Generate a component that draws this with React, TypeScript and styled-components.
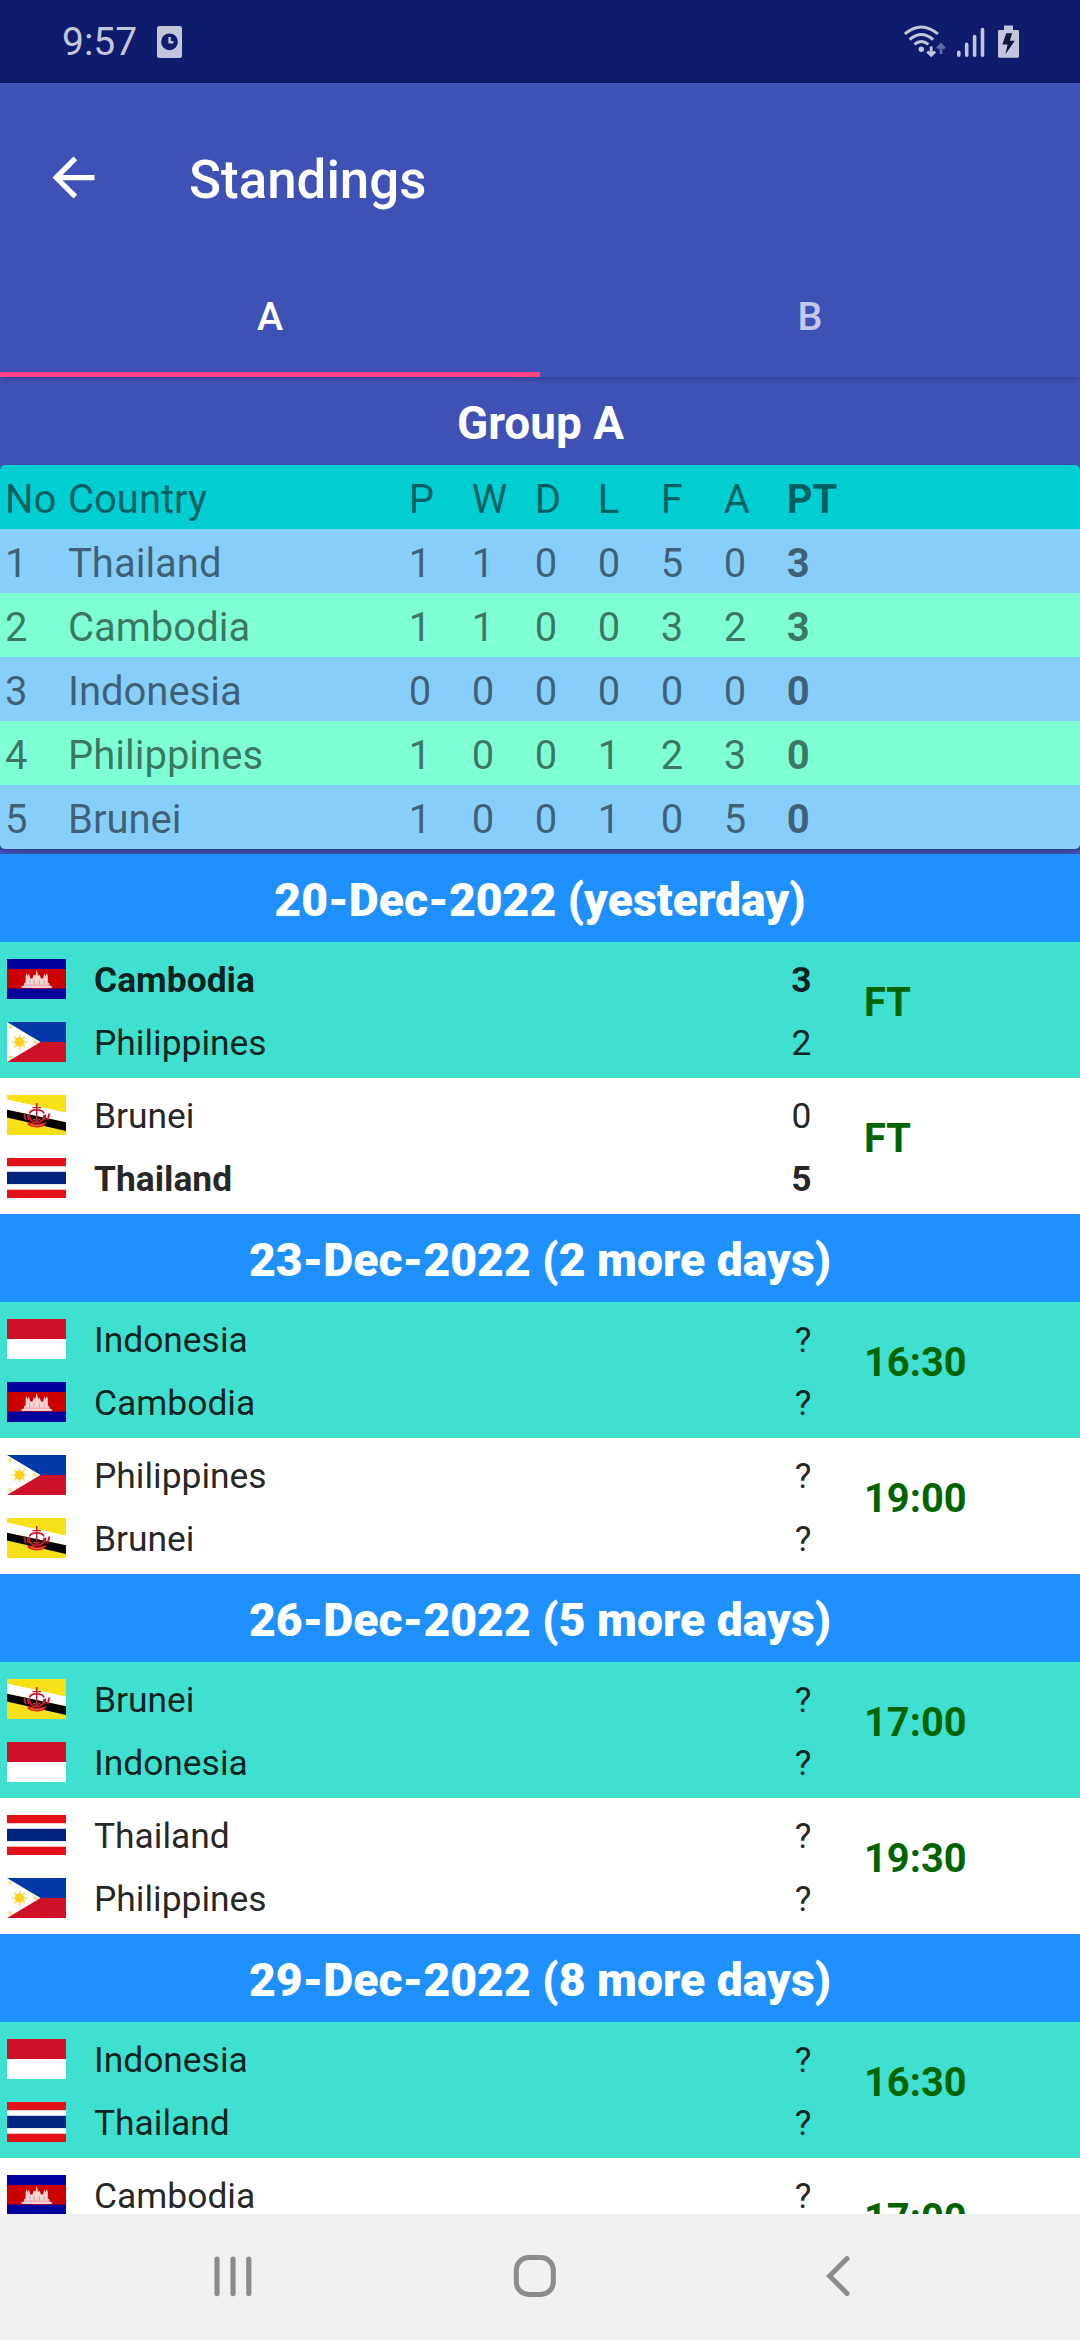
import React from 'react';
import styled, { createGlobalStyle } from 'styled-components';

const GlobalStyle = createGlobalStyle`
  *, *::before, *::after { box-sizing: border-box; }
  body { margin: 0; font-family: Roboto, 'Noto Sans', sans-serif; }
`;

const Screen = styled.div`
  width: 1080px;
  height: 2340px;
  display: flex;
  flex-direction: column;
  overflow: hidden;
  background: #3f51b5;
`;

const StatusBar = styled.div`
  flex: none;
  height: 83px;
  padding: 0 59px 0 62px;
  display: flex;
  align-items: center;
  justify-content: space-between;
  background: #0f1b6c;
  color: #c3c6db;
`;

const StatusGroup = styled.div`
  display: flex;
  align-items: center;
`;

const Clock = styled.span`
  width: 94.5px;
  font-size: 39px;
  line-height: 46px;
  padding-top: 1px;
`;

const AppBar = styled.header`
  flex: none;
  position: relative;
  z-index: 1;
  background: #3f51b5;
  box-shadow: 0 1px 7px rgba(0, 0, 0, 0.24);
`;

const Toolbar = styled.div`
  height: 168px;
  padding: 21px 0 0 42px;
  display: flex;
  align-items: center;
`;

const BackButton = styled.button`
  width: 147px;
  height: 63px;
  padding: 0;
  border: 0;
  background: none;
  display: flex;
  justify-content: flex-start;
`;

const Title = styled.h1`
  margin: 0;
  padding-top: 5px;
  color: #fff;
  font-size: 52.9px;
  font-weight: 500;
  line-height: 62px;
`;

const Tabs = styled.nav`
  height: 126px;
  display: grid;
  grid-template-columns: 1fr 1fr;
`;

const Tab = styled.div<{ $active?: boolean }>`
  display: flex;
  align-items: center;
  justify-content: center;
  padding-top: 10px;
  border-bottom: 5px solid ${(p) => (p.$active ? '#ff4081' : 'transparent')};
  color: ${(p) => (p.$active ? '#fff' : 'rgba(255, 255, 255, 0.7)')};
  font-size: 39.4px;
  font-weight: 500;
`;

const Content = styled.main`
  flex: 1;
  min-height: 0;
  overflow: hidden;
`;

const GroupHeading = styled.h2`
  margin: 0;
  height: 88px;
  padding: 3px 0 0 1px;
  display: flex;
  align-items: center;
  justify-content: center;
  color: #fff;
  font-size: 45.9px;
  font-weight: 700;
`;

const TableCard = styled.section`
  margin-bottom: 5px;
  border-radius: 5px;
  overflow: hidden;
  box-shadow: 0 2px 5px rgba(0, 0, 0, 0.28);
`;

const TableRow = styled.div<{ $bg: string }>`
  height: 64px;
  padding: 5px 0 0 5px;
  display: grid;
  grid-template-columns: 63px 340.75px repeat(6, 63px) 1fr;
  align-items: center;
  background: ${(p) => p.$bg};
  color: rgba(0, 0, 0, 0.54);
  font-size: 40px;
  line-height: 48px;
  white-space: nowrap;
`;

const Cell = styled.span<{ $strong?: boolean }>`
  font-weight: ${(p) => (p.$strong ? 700 : 400)};
`;

const DateHeading = styled.h2`
  margin: 0;
  height: 88px;
  padding-top: 3px;
  display: flex;
  align-items: center;
  justify-content: center;
  background: #1e90ff;
  color: #fff;
  font-size: 46.3px;
  font-weight: 900;
`;

const MatchCard = styled.article<{ $tinted: boolean }>`
  height: 136px;
  display: flex;
  background: ${(p) => (p.$tinted ? '#40e0d0' : '#fff')};
`;

const Teams = styled.div`
  width: 864px;
  padding: 6px 0 4px 7px;
`;

const TeamRow = styled.div<{ $won?: boolean }>`
  height: 63px;
  display: grid;
  grid-template-columns: 87px 660px 57.5px;
  align-items: center;
  color: rgba(0, 0, 0, 0.87);
  font-size: 35.4px;
  line-height: 43px;
  font-weight: ${(p) => (p.$won ? 700 : 400)};
`;

const TeamName = styled.span`
  padding-top: 2px;
`;

const Score = styled.span`
  padding-top: 2px;
  text-align: right;
`;

const FlagSvg = styled.svg`
  display: block;
  margin-bottom: 2px;
`;

const Kickoff = styled.div`
  height: 121px;
  display: flex;
  align-items: center;
  color: #006400;
  font-size: 39.8px;
  font-weight: 700;
`;

const NavBar = styled.footer`
  flex: none;
  height: 126px;
  padding: 0 210px;
  display: flex;
  align-items: center;
  justify-content: space-between;
  background: #f1f1f1;
`;

const HomeButton = styled.div`
  height: 46px;
  padding-right: 12px;
`;

type Country = 'Cambodia' | 'Philippines' | 'Brunei' | 'Thailand' | 'Indonesia';

const flagArt: Record<Country, React.ReactNode> = {
  Cambodia: (
    <>
      <rect width="59" height="40" fill="#00009c" />
      <rect y="10" width="59" height="19.6" fill="#cc0001" />
      <path
        fill="#f6d3d5"
        d="M14.5 29V27.2L17 26.4V24.4L18.6 23.6V17L19.6 14L20.8 17.6L22 14.2L23.2 19.5H25.4L26.8 15.5L28.2 17L29.7 10.8L31.2 17L32.6 15.5L34 19.5H36.2L37.4 14.2L38.6 17.6L39.8 14L40.8 17V23.6L42.4 24.4V26.4L45 27.2V29Z"
      />
      <path stroke="#e88b8f" strokeWidth="0.7" fill="none" d="M17 26.3H42.5M22.5 21V26M27 21V26M32.5 21V26M37 21V26" />
    </>
  ),
  Philippines: (
    <>
      <rect width="59" height="20" fill="#0038a8" />
      <rect y="20" width="59" height="20" fill="#ce1126" />
      <path fill="#fff" d="M0 0L33.5 20L0 40Z" />
      <path
        stroke="#fbdc60"
        strokeWidth="1.6"
        d="M4.8 20H20.2M12.5 12.3V27.7M7.1 14.6L17.9 25.4M17.9 14.6L7.1 25.4"
      />
      <circle cx="12.5" cy="20" r="4.6" fill="#fcd116" />
      <g fill="#fbdc60">
        <circle cx="3.2" cy="5" r="1.7" />
        <circle cx="3.2" cy="35" r="1.7" />
        <circle cx="28" cy="20" r="1.8" />
      </g>
    </>
  ),
  Brunei: (
    <>
      <rect width="59" height="40" fill="#f7e017" />
      <path fill="#fff" d="M0 4.6L59 17.4V27.2L0 14.8Z" />
      <path fill="#000" d="M0 14.8L59 27.2V36L0 22.6Z" />
      <g fill="none" stroke="#c41a2c">
        <path strokeWidth="1.4" d="M29.7 8V25M25.4 12.6H34" />
        <path strokeWidth="1.8" d="M22.5 18.6Q23.5 14.8 29.7 14.8T37 18.6" />
        <path strokeWidth="1.9" d="M17.2 18.5L18.8 25.2M42.4 18.5L40.6 25.2M20.8 19.5L21.4 25M38.6 19.5L38 25" />
        <path strokeWidth="2.2" d="M22 20Q22.5 27.4 29.7 27.4T37.4 20" />
      </g>
      <path fill="#d51f1f" d="M19.8 26.6Q29.7 31.6 39.8 26.6L38 30.6Q29.7 34.6 21.6 30.6Z" />
      <path stroke="#ef7a1a" strokeWidth="0.9" fill="none" d="M23.5 29.8Q29.7 31.8 36 29.8M26 24.5Q29.7 26 33.4 24.5" />
    </>
  ),
  Thailand: (
    <>
      <rect width="59" height="40" fill="#fff" />
      <rect width="59" height="8.2" fill="#e31218" />
      <rect y="13.8" width="59" height="12.3" fill="#00247d" />
      <rect y="31.7" width="59" height="8.3" fill="#e31218" />
    </>
  ),
  Indonesia: (
    <>
      <rect width="59" height="40" fill="#fff" />
      <rect width="59" height="20" fill="#ce1126" />
    </>
  ),
};

const Flag = ({ country }: { country: Country }) => (
  <FlagSvg width="59" height="40" viewBox="0 0 59 40">
    {flagArt[country]}
  </FlagSvg>
);

const tableHead = ['No', 'Country', 'P', 'W', 'D', 'L', 'F', 'A', 'PT'];
const standings = [
  ['1', 'Thailand', '1', '1', '0', '0', '5', '0', '3'],
  ['2', 'Cambodia', '1', '1', '0', '0', '3', '2', '3'],
  ['3', 'Indonesia', '0', '0', '0', '0', '0', '0', '0'],
  ['4', 'Philippines', '1', '0', '0', '1', '2', '3', '0'],
  ['5', 'Brunei', '1', '0', '0', '1', '0', '5', '0'],
];

interface Side {
  country: Country;
  score: string;
  won?: boolean;
}
interface Match {
  sides: Side[];
  status: string;
}

const upcoming = (home: Country, away: Country, status: string): Match => ({
  sides: [
    { country: home, score: '?' },
    { country: away, score: '?' },
  ],
  status,
});

const fixtures: { date: string; matches: Match[] }[] = [
  {
    date: '20-Dec-2022 (yesterday)',
    matches: [
      { sides: [{ country: 'Cambodia', score: '3', won: true }, { country: 'Philippines', score: '2' }], status: 'FT' },
      { sides: [{ country: 'Brunei', score: '0' }, { country: 'Thailand', score: '5', won: true }], status: 'FT' },
    ],
  },
  {
    date: '23-Dec-2022 (2 more days)',
    matches: [upcoming('Indonesia', 'Cambodia', '16:30'), upcoming('Philippines', 'Brunei', '19:00')],
  },
  {
    date: '26-Dec-2022 (5 more days)',
    matches: [upcoming('Brunei', 'Indonesia', '17:00'), upcoming('Thailand', 'Philippines', '19:30')],
  },
  {
    date: '29-Dec-2022 (8 more days)',
    matches: [
      upcoming('Indonesia', 'Thailand', '16:30'),
      { sides: [{ country: 'Cambodia', score: '?' }], status: '17:00' },
    ],
  },
];

const AlarmCardIcon = () => (
  <svg width="25" height="32" viewBox="0 0 25 32">
    <rect width="25" height="32" rx="2.5" fill="#c3c6db" />
    <circle cx="12.5" cy="15.8" r="8.4" fill="#0f1b6c" />
    <path d="M12.6 11V16.3H16.4" fill="none" stroke="#c3c6db" strokeWidth="2.4" />
  </svg>
);

const StatusIcons = () => (
  <svg width="117" height="35" viewBox="904 23 117 35">
    <g fill="none" stroke="#c3c6db" strokeWidth="2.9">
      <path d="M904.8 33Q921.3 18.8 938 33" />
      <path d="M909.6 38.6Q921.3 28.4 933.2 38.6" />
      <path d="M914.4 43.4Q921.3 37.6 928.4 43.4" />
    </g>
    <circle cx="921.3" cy="48.3" r="2.7" fill="#c3c6db" />
    <path d="M931.2 45.5V53.5M927.3 50.4L931.2 54.3L935.1 50.4" fill="none" stroke="#c3c6db" strokeWidth="2.8" />
    <path d="M941 53V44.5M937.2 47.4L941 43.6L944.8 47.4" fill="none" stroke="#5f68a3" strokeWidth="2.8" />
    <g stroke="#c3c6db" strokeWidth="3.6" strokeLinecap="round">
      <path d="M958.8 51.2V54.3M966.7 43.4V54.3M974.6 35.6V54.3M982.5 28.6V54.3" />
    </g>
    <path
      fill="#c3c6db"
      d="M1004 24.4H1013V29H1017.6Q1019 29 1019 30.4V55.4Q1019 56.8 1017.6 56.8H999.4Q998 56.8 998 55.4V30.4Q998 29 999.4 29H1004Z"
    />
    <path fill="#12163a" d="M1006.2 32.2H1012.2L1009.8 39.8H1014.8L1005.4 53.2L1007.6 43.4H1002.4Z" />
  </svg>
);

const BackArrowIcon = () => (
  <svg width="63" height="63" viewBox="0 0 24 24" fill="#fff">
    <path d="M20 11H7.83l5.59-5.59L12 4l-8 8 8 8 1.41-1.41L7.83 13H20v-2z" />
  </svg>
);

const RecentsIcon = () => (
  <svg width="46" height="46" viewBox="0 0 46 46" stroke="#8c8c8c" strokeWidth="5.2" strokeLinecap="round">
    <path d="M7 5.2V39.6M23 5.2V39.6M38.8 5.2V39.6" />
  </svg>
);

const HomeIcon = () => (
  <svg width="46" height="46" viewBox="0 0 46 46" fill="none" stroke="#8c8c8c" strokeWidth="5">
    <rect x="5.3" y="3.5" width="37" height="37" rx="12.5" />
  </svg>
);

const NavBackIcon = () => (
  <svg width="46" height="46" viewBox="0 0 46 46" fill="none" stroke="#8c8c8c" strokeWidth="5" strokeLinecap="round">
    <path d="M23 4.6L5.6 22L23 39.4" />
  </svg>
);

export default function App() {
  return (
    <Screen>
      <GlobalStyle />
      <StatusBar>
        <StatusGroup>
          <Clock>9:57</Clock>
          <AlarmCardIcon />
        </StatusGroup>
        <StatusIcons />
      </StatusBar>
      <AppBar>
        <Toolbar>
          <BackButton aria-label="Back">
            <BackArrowIcon />
          </BackButton>
          <Title>Standings</Title>
        </Toolbar>
        <Tabs>
          <Tab $active>A</Tab>
          <Tab>B</Tab>
        </Tabs>
      </AppBar>
      <Content>
        <GroupHeading>Group A</GroupHeading>
        <TableCard>
          {[tableHead, ...standings].map((row, r) => (
            <TableRow key={r} $bg={r === 0 ? '#00ced1' : r % 2 ? '#87cefa' : '#7fffd4'}>
              {row.map((value, c) => (
                <Cell key={c} $strong={c === row.length - 1}>
                  {value}
                </Cell>
              ))}
            </TableRow>
          ))}
        </TableCard>
        {fixtures.map((day) => (
          <section key={day.date}>
            <DateHeading>{day.date}</DateHeading>
            {day.matches.map((match, m) => (
              <MatchCard key={m} $tinted={m % 2 === 0}>
                <Teams>
                  {match.sides.map((side) => (
                    <TeamRow key={side.country} $won={side.won}>
                      <Flag country={side.country} />
                      <TeamName>{side.country}</TeamName>
                      <Score>{side.score}</Score>
                    </TeamRow>
                  ))}
                </Teams>
                <Kickoff>{match.status}</Kickoff>
              </MatchCard>
            ))}
          </section>
        ))}
      </Content>
      <NavBar>
        <RecentsIcon />
        <HomeButton>
          <HomeIcon />
        </HomeButton>
        <NavBackIcon />
      </NavBar>
    </Screen>
  );
}
